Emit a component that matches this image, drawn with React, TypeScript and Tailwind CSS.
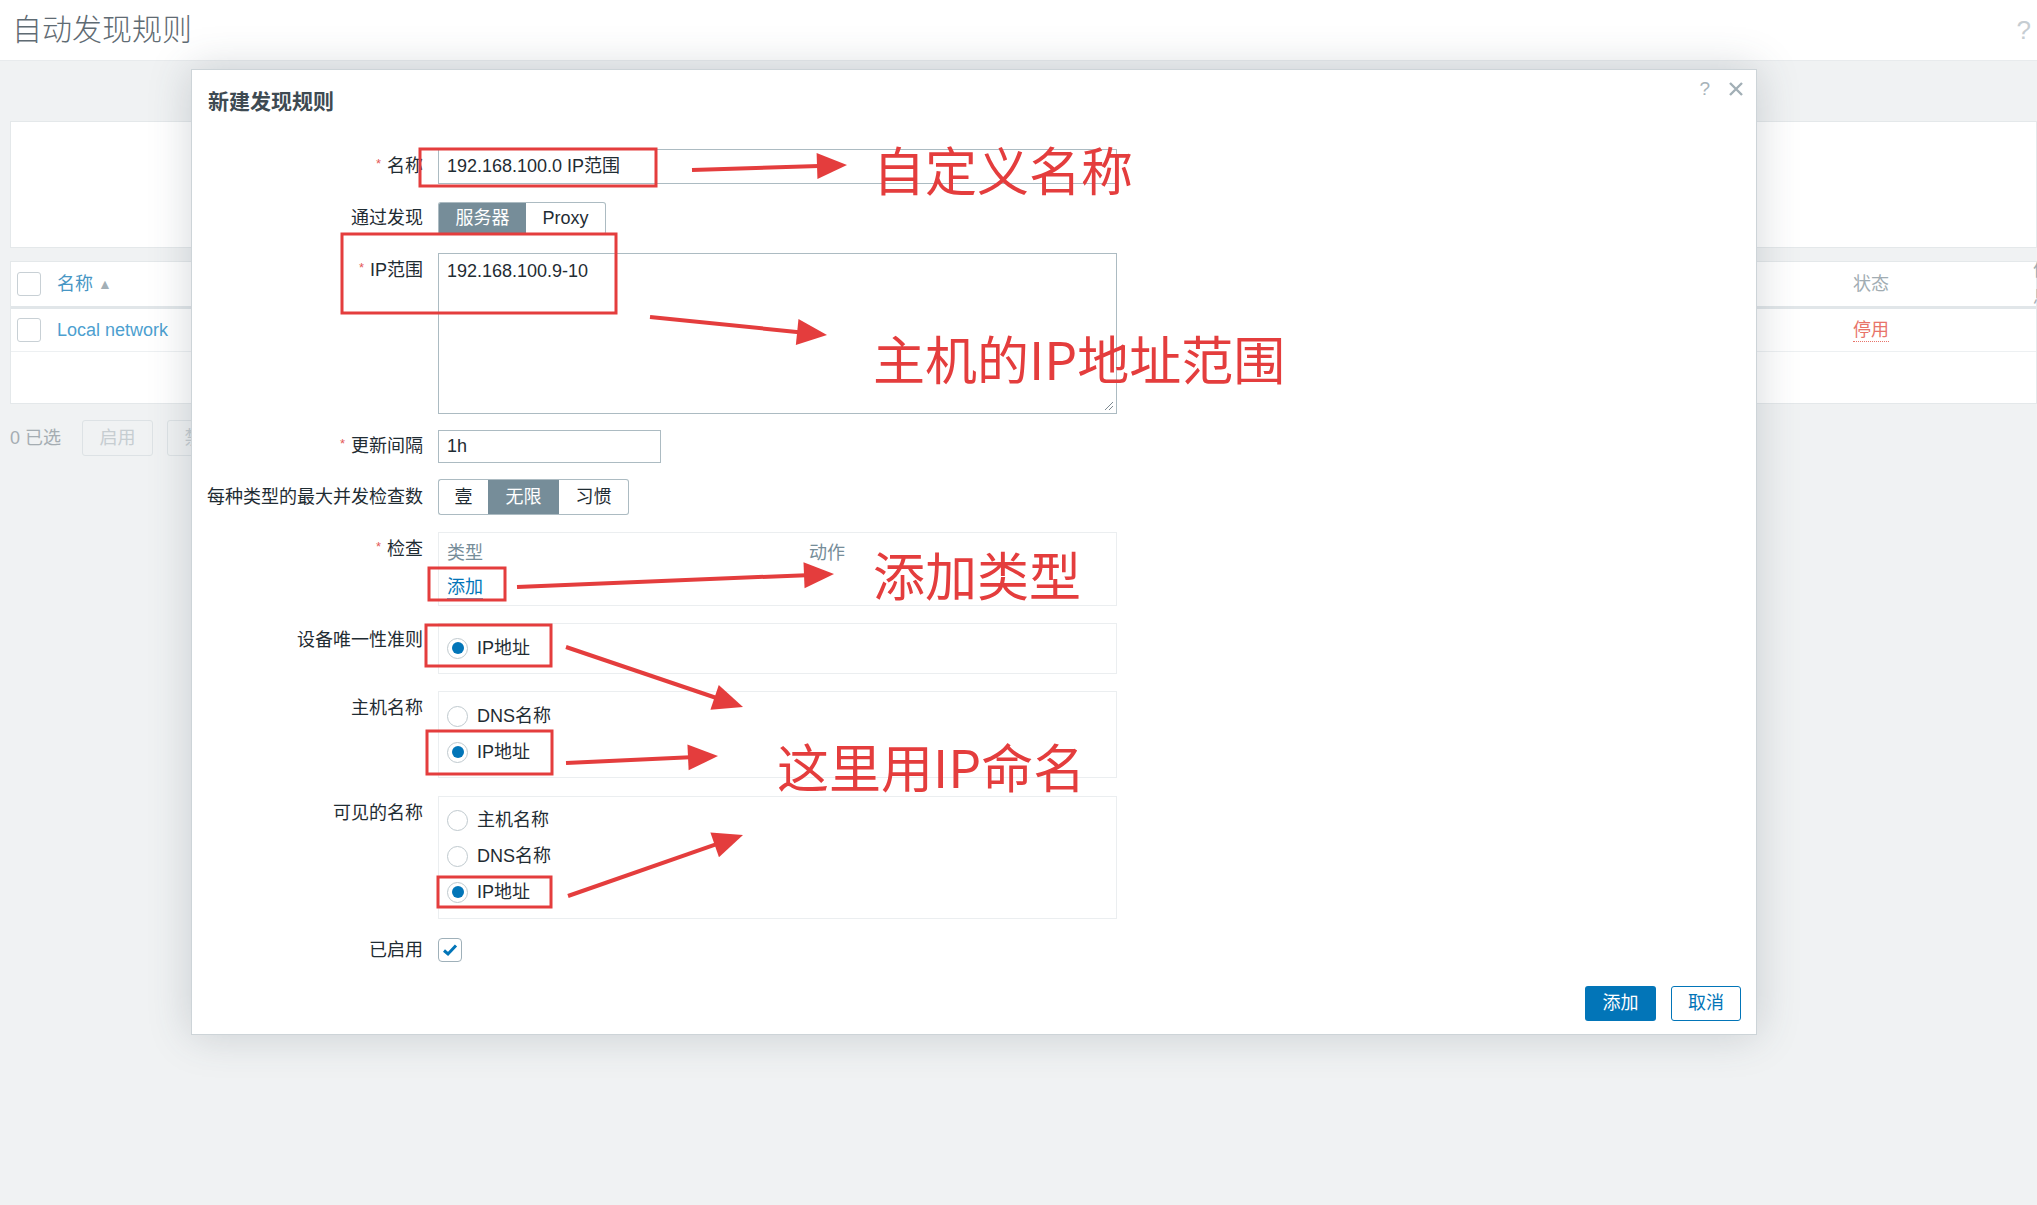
import React from "react";

const RED = "#e43d3d";

function Req() {
  return <span className="relative -top-[4px] mr-[6px] text-[13px] text-[#e45959]">*</span>;
}

function Label({ children, req, lh }: { children: React.ReactNode; req?: boolean; lh: string }) {
  return (
    <div className={`mr-[15px] w-[231px] shrink-0 whitespace-nowrap text-right text-[18px] text-[#1f2c33] ${lh}`}>
      {req && <Req />}
      {children}
    </div>
  );
}

function Radio({ checked, label }: { checked?: boolean; label: string }) {
  return (
    <div className="flex h-[36px] items-center gap-[9px]">
      <span className="flex h-[21px] w-[21px] items-center justify-center rounded-full border border-[#bfc9ce] bg-white">
        {checked && <span className="h-[12px] w-[12px] rounded-full bg-[#0275b8]" />}
      </span>
      <span className="text-[18px] text-[#1f2c33]">{label}</span>
    </div>
  );
}

function Segment({ items }: { items: { label: string; w: string; on?: boolean }[] }) {
  return (
    <div className="flex h-full">
      {items.map((it, i) => (
        <div
          key={it.label}
          className={`flex items-center justify-center border-y border-[#acbbc2] text-[18px] ${it.w} ${
            i === 0 ? "rounded-l-[3px] border-l" : ""
          } ${i === items.length - 1 ? "rounded-r-[3px] border-r" : ""} ${
            it.on ? "bg-[#768d99] border-[#768d99] text-white" : "bg-white text-[#1f2c33]"
          }`}
        >
          {it.label}
        </div>
      ))}
    </div>
  );
}

function Arrow({ x1, y1, x2, y2 }: { x1: number; y1: number; x2: number; y2: number }) {
  const dx = x2 - x1;
  const dy = y2 - y1;
  const len = Math.hypot(dx, dy);
  const ux = dx / len;
  const uy = dy / len;
  const hl = 30;
  const hw = 13;
  const bx = x2 - ux * hl;
  const by = y2 - uy * hl;
  const pts = `${x2},${y2} ${bx - uy * hw},${by + ux * hw} ${bx + uy * hw},${by - ux * hw}`;
  return (
    <g>
      <line x1={x1} y1={y1} x2={bx + ux * 2} y2={by + uy * 2} stroke={RED} strokeWidth={4} />
      <polygon points={pts} fill={RED} />
    </g>
  );
}

const boxes = [
  [420, 149, 236, 37],
  [342, 234, 274, 79],
  [429, 568, 76, 32],
  [426, 625, 125, 41],
  [427, 731, 125, 43],
  [438, 877, 113, 30],
];

const arrows = [
  [692, 170, 847, 165],
  [650, 317, 827, 335],
  [517, 587, 834, 574],
  [566, 647, 743, 707],
  [566, 763, 718, 756],
  [568, 896, 743, 835],
];

export default function App() {
  return (
    <div className="relative h-[1205px] w-[2037px] overflow-hidden bg-[#f0f2f3] font-['Liberation_Sans','Noto_Sans_CJK_SC',sans-serif]">
      {/* page header */}
      <header className="flex h-[61px] items-center justify-between border-b border-[#e8ebed] bg-white pl-[12px] pr-[6px]">
        <h1 className="text-[30px] font-light leading-none text-[#5f6b73]">自动发现规则</h1>
        <span className="text-[26px] text-[#c6cdd2]">?</span>
      </header>

      {/* filter */}
      <div className="ml-[10px] mt-[60px] h-[127px] border border-[#e4e8ea] bg-white" />

      {/* list */}
      <div className="ml-[10px] mt-[13px] h-[143px] border border-[#e4e8ea] bg-white">
        <div className="relative flex h-[47px] items-center border-b-[3px] border-[#e1e6e9]">
          <span className="ml-[6px] h-[24px] w-[24px] rounded-[3px] border border-[#c8d0d5]" />
          <span className="ml-[16px] text-[18px] text-[#4796c4]">名称</span>
          <span className="ml-[5px] text-[14px] text-[#a3afb6]">▲</span>
          <span className="absolute left-[1842px] text-[18px] text-[#a1acb2]">状态</span>
          <span className="absolute left-[2022px] text-[18px] text-[#a1acb2]">信息</span>
        </div>
        <div className="relative flex h-[43px] items-center border-b border-[#edf0f2]">
          <span className="ml-[6px] h-[24px] w-[24px] rounded-[3px] border border-[#c8d0d5]" />
          <span className="ml-[16px] text-[18px] text-[#4d9fd0]">Local network</span>
          <span className="absolute left-[1842px] border-b border-dotted border-[#e8746a] text-[18px] leading-[22px] text-[#e8746a]">
            停用
          </span>
        </div>
      </div>

      {/* action bar */}
      <div className="ml-[10px] mt-[16px] flex h-[36px] items-center">
        <span className="text-[18px] text-[#a5adb2]">0 已选</span>
        <span className="ml-[21px] flex h-[36px] w-[71px] items-center justify-center rounded-[3px] border border-[#dde2e5] text-[18px] text-[#c6cdd1]">
          启用
        </span>
        <span className="ml-[14px] flex h-[36px] w-[71px] items-center justify-center rounded-[3px] border border-[#dde2e5] text-[18px] text-[#c6cdd1]">
          禁用
        </span>
      </div>

      {/* modal */}
      <div className="absolute left-[191px] top-[69px] z-10 h-[966px] w-[1566px] border border-[#cdd4d8] bg-white shadow-[0_0_40px_rgba(60,75,85,0.22)]">
        <div className="absolute right-[12px] top-[5px] flex items-center gap-[18px]">
          <span className="text-[19px] text-[#a7b3b9]">?</span>
          <svg width="16" height="16" viewBox="0 0 16 16">
            <path d="M2 2L14 14M14 2L2 14" stroke="#a2afb6" strokeWidth="2.4" />
          </svg>
        </div>
        <h2 className="px-[16px] pt-[18px] text-[21px] font-bold leading-[28px] text-[#3e4a52]">新建发现规则</h2>

        <div className="mt-[33px] flex flex-col">
          <div className="flex h-[35px]">
            <Label req lh="leading-[35px]">名称</Label>
            <div className="h-[35px] w-[679px] border border-[#acbbc2] px-[8px] text-[18px] leading-[33px] text-[#1f2c33]">
              192.168.100.0 IP范围
            </div>
          </div>

          <div className="mt-[18px] flex h-[33px]">
            <Label lh="leading-[33px]">通过发现</Label>
            <Segment
              items={[
                { label: "服务器", w: "w-[88px]", on: true },
                { label: "Proxy", w: "w-[80px]" },
              ]}
            />
          </div>

          <div className="mt-[18px] flex">
            <Label req lh="pt-[5px] leading-6">IP范围</Label>
            <div className="relative h-[161px] w-[679px] border border-[#acbbc2] px-[8px] pt-[5px] text-[18px] leading-6 text-[#1f2c33]">
              192.168.100.9-10
              <svg className="absolute bottom-[2px] right-[2px]" width="11" height="11" viewBox="0 0 11 11">
                <path d="M10 2L2 10M10 6L6 10" stroke="#7d8a91" strokeWidth="1" />
              </svg>
            </div>
          </div>

          <div className="mt-[16px] flex h-[33px]">
            <Label req lh="leading-[33px]">更新间隔</Label>
            <div className="h-[33px] w-[223px] border border-[#acbbc2] px-[8px] text-[18px] leading-[31px] text-[#1f2c33]">1h</div>
          </div>

          <div className="mt-[16px] flex h-[36px]">
            <Label lh="leading-[36px]">每种类型的最大并发检查数</Label>
            <Segment
              items={[
                { label: "壹", w: "w-[50px]" },
                { label: "无限", w: "w-[71px]", on: true },
                { label: "习惯", w: "w-[70px]" },
              ]}
            />
          </div>

          <div className="mt-[17px] flex">
            <Label req lh="pt-[5px] leading-6">检查</Label>
            <div className="h-[74px] w-[679px] border border-[#ebeef0] px-[8px] pt-[8px] text-[18px] leading-6">
              <div className="flex text-[#768d99]">
                <span className="w-[362px]">类型</span>
                <span>动作</span>
              </div>
              <div className="mt-[10px]">
                <span className="inline-block border-b-[3px] border-[#5ea3d3] leading-[22px] text-[#0275b8]">添加</span>
              </div>
            </div>
          </div>

          <div className="mt-[17px] flex">
            <Label lh="pt-[5px] leading-6">设备唯一性准则</Label>
            <div className="h-[51px] w-[679px] border border-[#ebeef0] px-[8px] pt-[6px]">
              <Radio checked label="IP地址" />
            </div>
          </div>

          <div className="mt-[17px] flex">
            <Label lh="pt-[5px] leading-6">主机名称</Label>
            <div className="h-[87px] w-[679px] border border-[#ebeef0] px-[8px] pt-[6px]">
              <Radio label="DNS名称" />
              <Radio checked label="IP地址" />
            </div>
          </div>

          <div className="mt-[18px] flex">
            <Label lh="pt-[5px] leading-6">可见的名称</Label>
            <div className="h-[123px] w-[679px] border border-[#ebeef0] px-[8px] pt-[5px]">
              <Radio label="主机名称" />
              <Radio label="DNS名称" />
              <Radio checked label="IP地址" />
            </div>
          </div>

          <div className="mt-[19px] flex h-[24px] items-center">
            <Label lh="leading-[24px]">已启用</Label>
            <span className="flex h-[24px] w-[24px] items-center justify-center rounded-[4px] border border-[#9fb0b9]">
              <svg width="16" height="14" viewBox="0 0 16 14">
                <path d="M2 7.5L6 11L14 2.5" fill="none" stroke="#0275b8" strokeWidth="3" />
              </svg>
            </span>
          </div>
        </div>

        <div className="mt-[24px] flex justify-end gap-[15px] pr-[15px]">
          <button className="h-[35px] w-[71px] rounded-[3px] bg-[#0275b8] text-[18px] text-white">添加</button>
          <button className="h-[35px] w-[70px] rounded-[3px] border border-[#0275b8] bg-white text-[18px] text-[#0275b8]">
            取消
          </button>
        </div>
      </div>

      {/* annotations */}
      <svg className="pointer-events-none absolute left-0 top-0 z-20" width="2037" height="1205">
        {boxes.map(([x, y, w, h], i) => (
          <rect key={i} x={x} y={y} width={w} height={h} fill="none" stroke={RED} strokeWidth={3} />
        ))}
        {arrows.map(([x1, y1, x2, y2], i) => (
          <Arrow key={i} x1={x1} y1={y1} x2={x2} y2={y2} />
        ))}
      </svg>
      <div className="pointer-events-none absolute left-[873px] top-[141px] z-20 font-['Noto_Sans_CJK_SC',sans-serif] text-[52px] leading-[56px] text-[#e43d3d]">
        自定义名称
      </div>
      <div className="pointer-events-none absolute left-[873px] top-[330px] z-20 font-['Noto_Sans_CJK_SC',sans-serif] text-[52px] leading-[56px] text-[#e43d3d]">
        主机的IP地址范围
      </div>
      <div className="pointer-events-none absolute left-[873px] top-[546px] z-20 font-['Noto_Sans_CJK_SC',sans-serif] text-[52px] leading-[56px] text-[#e43d3d]">
        添加类型
      </div>
      <div className="pointer-events-none absolute left-[777px] top-[738px] z-20 font-['Noto_Sans_CJK_SC',sans-serif] text-[52px] leading-[56px] text-[#e43d3d]">
        这里用IP命名
      </div>
    </div>
  );
}
